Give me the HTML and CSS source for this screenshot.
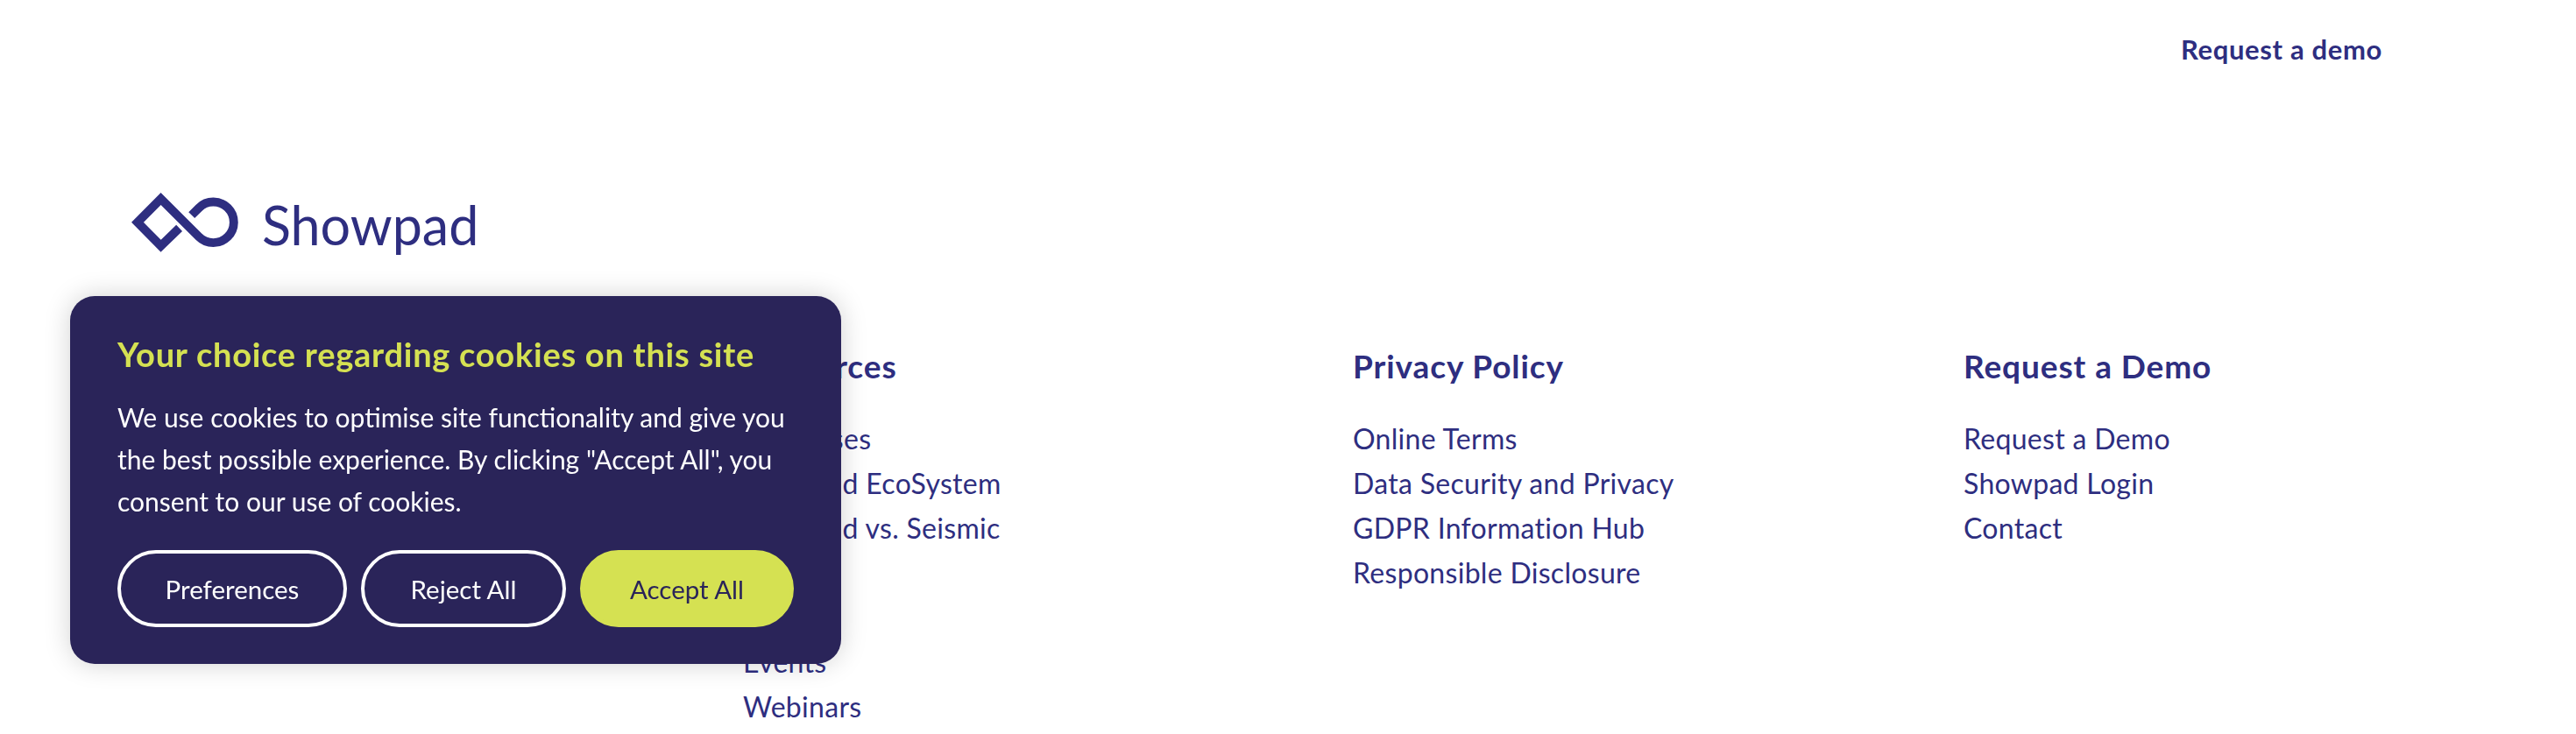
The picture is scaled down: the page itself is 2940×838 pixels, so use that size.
FILE: index.html
```html
<!DOCTYPE html>
<html lang="en">
<head>
    <meta charset="UTF-8">
    <title>Showpad</title>
    <link rel="stylesheet" href="styles.css">
</head>
<body>
    <header class="topbar">
        <a class="demo-link" href="#">Request a demo</a>
    </header>

    <div class="logo">
        <svg class="logo-mark" viewBox="91 92 371 207" aria-hidden="true">
            <path d="M257 215 L193 277 L112 195 L193 113.5 L325 245 A71 71 0 1 0 325 145 L300 170"></path>
        </svg>
        <span class="logo-word">Showpad</span>
    </div>

    <footer class="footer-cols">
        <div></div>
        <div class="col">
            <h3>Resources</h3>
            <ul>
                <li><a href="#">Use Cases</a></li>
                <li><a href="#">Showpad EcoSystem</a></li>
                <li><a href="#">Showpad vs. Seismic</a></li>
                <li><a href="#">Blog</a></li>
                <li><a href="#">Guides</a></li>
                <li><a href="#">Events</a></li>
                <li><a href="#">Webinars</a></li>
            </ul>
        </div>
        <div class="col">
            <h3>Privacy Policy</h3>
            <ul>
                <li><a href="#">Online Terms</a></li>
                <li><a href="#">Data Security and Privacy</a></li>
                <li><a href="#">GDPR Information Hub</a></li>
                <li><a href="#">Responsible Disclosure</a></li>
            </ul>
        </div>
        <div class="col">
            <h3>Request a Demo</h3>
            <ul>
                <li><a href="#">Request a Demo</a></li>
                <li><a href="#">Showpad Login</a></li>
                <li><a href="#">Contact</a></li>
            </ul>
        </div>
    </footer>

    <div class="cookie-box">
        <h2>Your choice regarding cookies on this site</h2>
        <p>We use cookies to optimise site functionality and give you the best possible experience. By clicking "Accept All", you consent to our use of cookies.</p>
        <div class="cookie-btns">
            <button class="btn btn-pref">Preferences</button>
            <button class="btn btn-reject">Reject All</button>
            <button class="btn btn-accept">Accept All</button>
        </div>
    </div>
</body>
</html>
```

FILE: styles.css
```css
html, body {
    height: 100%;
    overflow: hidden;
}
body {
    margin: 0;
    background-color: #fff;
    color: #2e2e80;
    font-family: Lato, "Liberation Sans", sans-serif;
}
a {
    color: inherit;
    text-decoration: none;
}
.topbar {
    display: flex;
    justify-content: flex-end;
    height: 112px;
    padding: 38px 221px 0 0;
    box-sizing: border-box;
}
.demo-link {
    font-size: 31px;
    line-height: 36px;
    font-weight: 700;
    letter-spacing: 0.65px;
}
.logo {
    display: flex;
    align-items: center;
    gap: 27px;
    height: 68px;
    margin: 108px 0 0 150px;
}
.logo-mark {
    width: 122px;
    height: 68px;
}
.logo-mark path {
    fill: none;
    stroke: #2e2e80;
    stroke-width: 30;
}
.logo-word {
    font-size: 61px;
    line-height: 68px;
    margin-top: 6px;
}
.footer-cols {
    display: grid;
    grid-template-columns: 698px 696px 697px 600px;
    margin-top: 110px;
    padding-left: 150px;
}
.col h3 {
    margin: 0 0 37px;
    font-size: 37px;
    line-height: 40px;
    font-weight: 700;
    letter-spacing: 0.9px;
}
.col ul {
    margin: 0;
    padding: 0;
    list-style: none;
}
.col li {
    font-size: 32px;
    line-height: 51px;
    letter-spacing: 0.3px;
}
.cookie-box {
    position: fixed;
    left: 80px;
    top: 338px;
    width: 880px;
    height: 420px;
    box-sizing: border-box;
    padding: 44px 54px 0;
    background-color: #2a2459;
    border-radius: 28px;
    box-shadow: 0 0 30px rgba(0, 0, 0, 0.18);
    color: #fff;
}
.cookie-box h2 {
    margin: 0 0 26px;
    color: #d5e152;
    font-size: 38px;
    line-height: 44px;
    font-weight: 700;
    letter-spacing: 0.74px;
}
.cookie-box p {
    margin: 0 0 32px;
    font-size: 30px;
    line-height: 48px;
}
.cookie-btns {
    display: flex;
    gap: 16px;
}
.btn {
    height: 88px;
    border: 4px solid #fff;
    border-radius: 44px;
    background: transparent;
    color: #fff;
    font-family: inherit;
    font-size: 29.5px;
    padding: 0;
}
.btn-pref {
    width: 262px;
}
.btn-reject {
    width: 234px;
}
.btn-accept {
    width: 244px;
    border-color: #d5e152;
    background-color: #d5e152;
    color: #2a2459;
}
```
